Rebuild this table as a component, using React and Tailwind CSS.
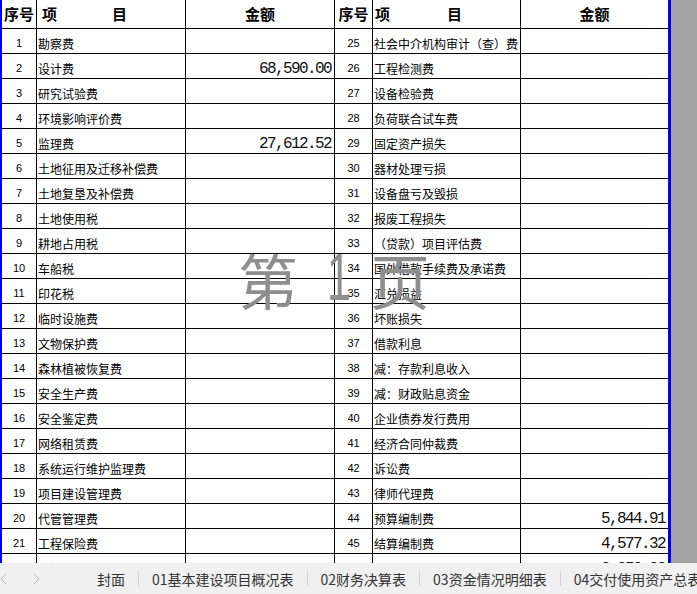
import React from "react";

const left = [
  ["1", "勘察费", ""],
  ["2", "设计费", "68,590.00"],
  ["3", "研究试验费", ""],
  ["4", "环境影响评价费", ""],
  ["5", "监理费", "27,612.52"],
  ["6", "土地征用及迁移补偿费", ""],
  ["7", "土地复垦及补偿费", ""],
  ["8", "土地使用税", ""],
  ["9", "耕地占用税", ""],
  ["10", "车船税", ""],
  ["11", "印花税", ""],
  ["12", "临时设施费", ""],
  ["13", "文物保护费", ""],
  ["14", "森林植被恢复费", ""],
  ["15", "安全生产费", ""],
  ["16", "安全鉴定费", ""],
  ["17", "网络租赁费", ""],
  ["18", "系统运行维护监理费", ""],
  ["19", "项目建设管理费", ""],
  ["20", "代管管理费", ""],
  ["21", "工程保险费", ""],
  ["22", "招投标费", ""],
];

const right = [
  ["25", "社会中介机构审计（查）费", ""],
  ["26", "工程检测费", ""],
  ["27", "设备检验费", ""],
  ["28", "负荷联合试车费", ""],
  ["29", "固定资产损失", ""],
  ["30", "器材处理亏损", ""],
  ["31", "设备盘亏及毁损", ""],
  ["32", "报废工程损失", ""],
  ["33", "（贷款）项目评估费", ""],
  ["34", "国外借款手续费及承诺费", ""],
  ["35", "汇兑损益", ""],
  ["36", "坏账损失", ""],
  ["37", "借款利息", ""],
  ["38", "减：存款利息收入", ""],
  ["39", "减：财政贴息资金", ""],
  ["40", "企业债券发行费用", ""],
  ["41", "经济合同仲裁费", ""],
  ["42", "诉讼费", ""],
  ["43", "律师代理费", ""],
  ["44", "预算编制费", "5,844.91"],
  ["45", "结算编制费", "4,577.32"],
  ["46", "决算编制费", "3,250.00"],
];

const cjk = "font-['Noto_Sans_CJK_SC',sans-serif]";
const grid =
  "grid grid-cols-[35px_149px_149px_38px_148px_147px] border-b border-black";

function Seq({ v }) {
  return (
    <div className="flex items-end justify-center border-r border-black pb-[4px] font-['Liberation_Sans',sans-serif] text-[11px] leading-none text-black">
      {v}
    </div>
  );
}

function Name({ v, border = true }) {
  return (
    <div
      className={`flex items-end overflow-hidden whitespace-nowrap pb-[3px] pl-[1px] ${cjk} text-[12px] leading-none text-black ${
        border ? "border-r border-black" : ""
      }`}
    >
      {v}
    </div>
  );
}

function Amount({ v, border = true }) {
  return (
    <div
      className={`flex items-end justify-end pb-[1px] pr-[3px] font-['Liberation_Mono',monospace] text-[16px] leading-none tracking-[-1.6px] text-[#111111] ${
        border ? "border-r border-black" : ""
      }`}
    >
      {v}
    </div>
  );
}

function Chevron({ dir }) {
  return (
    <svg width="7" height="12" viewBox="0 0 7 12" className="shrink-0">
      <polyline
        points={dir === "l" ? "6,1 1,6 6,11" : "1,1 6,6 1,11"}
        fill="none"
        stroke="#b4b4b4"
        strokeWidth="1"
      />
    </svg>
  );
}

const tabs = ["封面", "01基本建设项目概况表", "02财务决算表", "03资金情况明细表", "04交付使用资产总表"];

export default function App() {
  return (
    <div className="flex h-[594px] w-[697px] flex-col overflow-hidden bg-white">
      <div className="relative flex h-[563px] overflow-hidden">
        <div className="w-[2px] shrink-0 bg-[#0000f0]" />
        <div className="w-[666px] shrink-0">
          <div className={`${grid} h-[29px] font-bold text-black ${cjk}`}>
            <div className="flex items-center justify-center border-r border-black text-[15px]">序号</div>
            <div className="flex items-center border-r border-black pl-[5px] text-[15px]">
              <span>项</span>
              <span className="ml-[55px]">目</span>
            </div>
            <div className="flex items-center justify-center border-r border-black text-[15px]">金额</div>
            <div className="flex items-center justify-center border-r border-black text-[15px]">序号</div>
            <div className="flex items-center border-r border-black pl-[2px] text-[15px]">
              <span>项</span>
              <span className="ml-[57px]">目</span>
            </div>
            <div className="flex items-center justify-center text-[15px]">金额</div>
          </div>
          {left.map((l, i) => {
            const r = right[i];
            return (
              <div key={i} className={`${grid} h-[25px]`}>
                <Seq v={l[0]} />
                <Name v={l[1]} />
                <Amount v={l[2]} />
                <Seq v={r[0]} />
                <Name v={r[1]} />
                <Amount v={r[2]} border={false} />
              </div>
            );
          })}
        </div>
        <div className="w-[3px] shrink-0 bg-[#0000f0]" />
        <div className="flex-1 bg-[#a3a3a3]" />

        <div className="pointer-events-none absolute inset-0 font-['Noto_Sans_CJK_SC',sans-serif] text-[60px] leading-none text-[#8e8e8e]">
          <span className="absolute left-[238px] top-[249px]">第</span>
          <span className="absolute left-[327px] top-[244px] origin-left scale-x-[0.65] font-['Liberation_Sans',sans-serif] text-[66px]">1</span>
          <span className="absolute left-[370px] top-[249px]">页</span>
        </div>
      </div>

      <div className={`flex h-[31px] items-center bg-[#f0f0f0] ${cjk} text-[14px] leading-none text-[#333333]`}>
        <div>
          <Chevron dir="l" />
        </div>
        <div className="ml-[26px]">
          <Chevron dir="r" />
        </div>
        <div className="ml-[57px] flex items-center">
          {tabs.map((t, i) => (
            <React.Fragment key={t}>
              {i > 0 && <div className="mx-[13px] h-[15px] w-px bg-[#d2d2d2]" />}
              <span className="whitespace-nowrap">{t}</span>
            </React.Fragment>
          ))}
        </div>
      </div>
    </div>
  );
}
